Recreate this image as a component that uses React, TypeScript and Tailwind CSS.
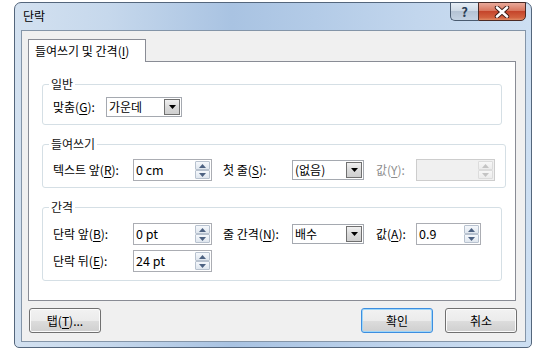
import React from 'react';

const U = ({ children }: { children: React.ReactNode }) => (
  <span className="underline underline-offset-[2px] decoration-1">{children}</span>
);

function Arrow({ up, color }: { up?: boolean; color: string }) {
  return (
    <svg width="7" height="4" viewBox="0 0 7 4" className="block">
      <path d={up ? 'M0 4 L3.5 0 L7 4 Z' : 'M0 0 L7 0 L3.5 4 Z'} fill={color} />
    </svg>
  );
}

function SpinBox({ value, className, disabled }: { value: string; className: string; disabled?: boolean }) {
  const btn = disabled
    ? 'border-[#dcdcdc] bg-[linear-gradient(#f7f7f7,#ececec)]'
    : 'border-[#b8c2cf] bg-[linear-gradient(#f5f8fc,#dfe6ee)]';
  const arrow = disabled ? '#c4c4c4' : '#4d6282';
  return (
    <div
      className={`flex h-[22px] items-stretch border ${
        disabled ? 'border-[#cdcdcd] bg-[#f0f0f0]' : 'border-[#abadb3] bg-white'
      } ${className}`}
    >
      <div className="flex-1 pl-[2px] leading-[20px] text-[12.5px] text-black">{value}</div>
      <div className="flex w-[16px] flex-col py-px pr-px">
        <div className={`flex h-[9px] items-center justify-center rounded-[1px] border ${btn}`}>
          <Arrow up color={arrow} />
        </div>
        <div className={`flex h-[9px] items-center justify-center rounded-[1px] border ${btn}`}>
          <Arrow color={arrow} />
        </div>
      </div>
    </div>
  );
}

function Combo({ value, className }: { value: string; className: string }) {
  return (
    <div className={`flex h-[20px] items-center border border-[#a5a9b0] bg-white pr-px ${className}`}>
      <div className="flex-1 pl-[2px] leading-[18px] text-black">{value}</div>
      <div className="flex h-[16px] w-[16px] items-center justify-center border border-[#707070] bg-[linear-gradient(#f0f0f0,#dadada_50%,#cfcfcf)]">
        <Arrow color="#000000" />
      </div>
    </div>
  );
}

function Group({ title, className, children }: { title: string; className: string; children: React.ReactNode }) {
  return (
    <fieldset className={`mx-[13px] rounded-[3px] border border-[#d5dfe5] px-[10px] ${className}`}>
      <legend className="ml-[-4px] px-[2px] leading-[16px] text-[#111111]">{title}</legend>
      {children}
    </fieldset>
  );
}

function Button({ children, primary, className }: { children: React.ReactNode; primary?: boolean; className?: string }) {
  return (
    <div
      className={`flex h-[25px] w-[72px] items-center justify-center rounded-[3px] border text-black ${
        primary
          ? 'border-[#3c8ee0] shadow-[inset_0_0_0_1px_#9fd6f8]'
          : 'border-[#707070] shadow-[inset_0_0_0_1px_#fbfbfb]'
      } bg-[linear-gradient(#f2f2f2_0%,#ebebeb_50%,#dddddd_50%,#cfcfcf_100%)] ${className ?? ''}`}
    >
      {children}
    </div>
  );
}

export default function App() {
  return (
    <div className="h-[360px] w-[543px] bg-white pl-[14px] pt-[2px] font-['Noto_Sans_CJK_KR','Noto_Sans',sans-serif] text-[12px] text-black">
      {/* window frame */}
      <div className="h-[346px] w-[518px] rounded-t-[7px] rounded-b-[5px] border border-[#54667c] bg-[linear-gradient(90deg,#d3e1f0_0%,#c6d8ec_18%,#a9c3e2_42%,#b3cbe7_58%,#c2d6ed_78%,#cddff2_100%)] pb-[5px] pl-[6px] pr-[5px]">
        {/* title bar */}
        <div className="flex h-[27px] items-start justify-between">
          <div className="pl-[2px] pt-[5px] leading-[16px] text-black">단락</div>
          <div className="-mt-px flex h-[19px]">
            <div className="flex w-[28px] items-center justify-center rounded-bl-[5px] border border-r-0 border-[#4a5b70] bg-[linear-gradient(#e6edf5,#cfdae6_45%,#b5c3d4_50%,#c4d2e2)] text-[13px] font-bold leading-none text-[#2c3e55]">
              ?
            </div>
            <div className="flex w-[48px] items-center justify-center rounded-br-[5px] border border-[#4a2a25] bg-[linear-gradient(#e9a99a,#d9775f_45%,#c5452b_50%,#d2613f_85%,#e08a64)]">
              <svg width="16" height="12" viewBox="0 0 16 12">
                <path d="M3 1.5 L13 10.5 M13 1.5 L3 10.5" stroke="#3a1a14" strokeWidth="4.4" strokeLinecap="round" />
                <path d="M3 1.5 L13 10.5 M13 1.5 L3 10.5" stroke="#ffffff" strokeWidth="2.6" strokeLinecap="round" />
              </svg>
            </div>
          </div>
        </div>

        {/* client area */}
        <div className="h-[312px] w-[505px] border border-[#8495a8] bg-[#f0f0f0] pl-[6px] pt-[8px]">
          <div className="relative z-10 -mb-px flex h-[23px] w-[118px] border border-b-0 border-[#898c95] bg-white pl-[6px] pt-[3px] leading-[16px]">
            들여쓰기 및 간격(<U>I</U>)
          </div>
          <div className="h-[240px] w-[488px] border border-[#898c95] bg-white">
            <Group title="일반" className="mt-[14px] pb-[6px]">
              <div className="mt-[4px] flex h-[22px] items-center">
                <div className="w-[53px]">
                  맞춤(<U>G</U>):
                </div>
                <Combo value="가운데" className="w-[76px]" />
              </div>
            </Group>

            <Group title="들여쓰기" className="mt-[11px] pb-[6px]">
              <div className="mt-[7px] flex h-[22px] items-center">
                <div className="w-[80px]">
                  텍스트 앞(<U>R</U>):
                </div>
                <SpinBox value="0 cm" className="w-[79px]" />
                <div className="ml-[11px] w-[69px]">
                  첫 줄(<U>S</U>):
                </div>
                <Combo value="(없음)" className="w-[72px]" />
                <div className="ml-[12px] w-[40px] text-[#8d8d8d]">
                  값(<U>Y</U>):
                </div>
                <SpinBox value="" disabled className="w-[79px]" />
              </div>
            </Group>

            <Group title="간격" className="mt-[11px] pb-[8px]">
              <div className="mt-[8px] flex h-[22px] items-center">
                <div className="w-[80px]">
                  단락 앞(<U>B</U>):
                </div>
                <SpinBox value="0 pt" className="w-[79px]" />
                <div className="ml-[11px] w-[69px]">
                  줄 간격(<U>N</U>):
                </div>
                <Combo value="배수" className="w-[72px]" />
                <div className="ml-[12px] w-[40px]">
                  값(<U>A</U>):
                </div>
                <SpinBox value="0.9" className="w-[65px]" />
              </div>
              <div className="mt-[5px] flex h-[22px] items-center">
                <div className="w-[80px]">
                  단락 뒤(<U>E</U>):
                </div>
                <SpinBox value="24 pt" className="w-[79px]" />
              </div>
            </Group>
          </div>

          {/* buttons */}
          <div className="mt-[7px] flex w-[489px] items-center justify-between pl-px">
            <Button>
              탭(<U>T</U>)...
            </Button>
            <div className="flex gap-[12px]">
              <Button primary>확인</Button>
              <Button>취소</Button>
            </div>
          </div>
        </div>
      </div>
    </div>
  );
}
